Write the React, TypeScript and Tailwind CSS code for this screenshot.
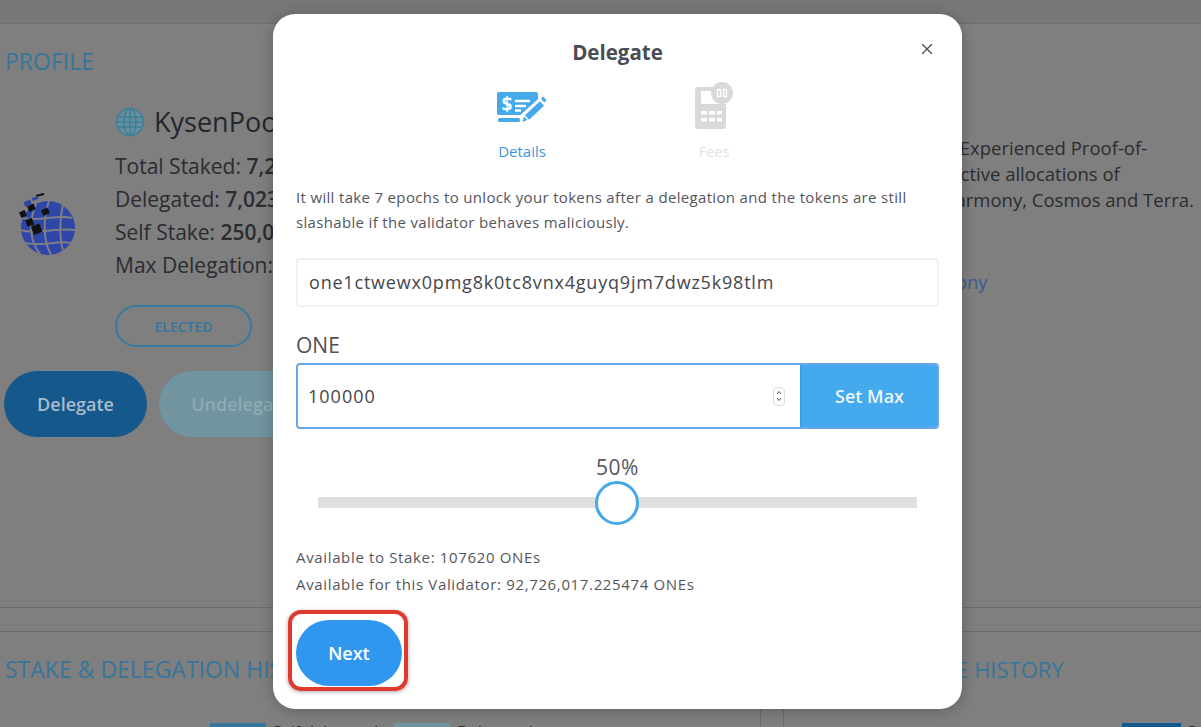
import React from 'react';
import { X } from 'lucide-react';

const font = { fontFamily: '"Open Sans", sans-serif' };

const GlobeLogo = () => (
  <svg className="w-[60px] h-[66px]" viewBox="0 0 60 66">
    <circle cx="30" cy="36" r="27" fill="#2f46a8" />
    <g stroke="#7c7f86" strokeWidth="2" fill="none">
      <path d="M5 26C18 30 42 22 54 26" />
      <path d="M3 38C18 43 42 35 57 38" />
      <path d="M7 51C20 55 42 48 53 51" />
      <path d="M18 12C10 30 12 50 22 62" />
      <path d="M31 9C24 30 26 50 33 63" />
      <path d="M45 13C41 30 42 50 45 58" />
    </g>
    <g fill="#111">
      <rect x="2" y="19" width="6" height="6" transform="rotate(-25 5 22)" />
      <rect x="10" y="13" width="7" height="6" transform="rotate(-25 13 16)" />
      <rect x="8" y="27" width="7" height="7" transform="rotate(-20 11 30)" />
      <rect x="24" y="17" width="7" height="6" transform="rotate(-25 27 20)" />
      <rect x="14" y="33" width="9" height="9" transform="rotate(-20 18 37)" />
      <rect x="18" y="2" width="8" height="2" transform="rotate(-15 22 3)" />
    </g>
    <g fill="#2f46a8">
      <rect x="6" y="9" width="7" height="5" transform="rotate(-25 9 11)" />
      <rect x="14" y="5" width="6" height="3" transform="rotate(-20 17 6)" />
    </g>
  </svg>
);

const WebIcon = () => (
  <svg className="w-[30px] h-[30px]" viewBox="0 0 30 30" fill="none" stroke="#3d7f96" strokeWidth="1.5">
    <circle cx="15" cy="15" r="13.5" fill="#6a8f9c" />
    <ellipse cx="15" cy="15" rx="6" ry="13.5" />
    <path d="M15 1.5V28.5M2 10H28M2 20H28M1.5 15H28.5" />
  </svg>
);

const DetailsIcon = () => (
  <svg className="w-[50px] h-[32px]" viewBox="0 0 50 32">
    <path d="M2 1H39a2 2 0 0 1 2 2V24H2a2 2 0 0 1-2-2V3a2 2 0 0 1 2-2Z" fill="#45a9ea" />
    <text x="10" y="20" textAnchor="middle" fontSize="19" fontWeight="700" fill="#fff" fontFamily="Open Sans, sans-serif">$</text>
    <path d="M18 10H33M18 15H29M18 19.5H24" stroke="#fff" strokeWidth="2.4" />
    <path d="M27 28L46 11" stroke="#fff" strokeWidth="11" />
    <path d="M30 26.5L45 12.5" stroke="#45a9ea" strokeWidth="6" />
    <path d="M25.5 31L27 25.5L30.5 29Z" fill="#45a9ea" />
    <path d="M45.5 9.5L48 7.5" stroke="#45a9ea" strokeWidth="5" />
    <rect x="1" y="27" width="22" height="4" rx="1.5" fill="#45a9ea" />
  </svg>
);

const FeesIcon = () => (
  <svg className="w-[38px] h-[48px]" viewBox="0 0 38 48">
    <path d="M3 5H18V9H6V18H31V44a3 3 0 0 1-3 3H3a3 3 0 0 1-3-3V8a3 3 0 0 1 3-3Z" fill="#d9d9d9" />
    <rect x="6" y="9" width="25" height="13" fill="#fff" />
    <path d="M0 24H31" stroke="#d9d9d9" strokeWidth="3" />
    <g fill="#fff">
      <rect x="6" y="29" width="6" height="3.5" />
      <rect x="14" y="29" width="6" height="3.5" />
      <rect x="22" y="29" width="5" height="3.5" />
      <rect x="6" y="36" width="6" height="3.5" />
      <rect x="14" y="36" width="6" height="3.5" />
      <rect x="22" y="36" width="5" height="3.5" />
    </g>
    <circle cx="27" cy="11" r="11" fill="#d9d9d9" />
    <path d="M22.5 7.5h3v7h-3zM28.5 7.5h3v7h-3z" fill="none" stroke="#fff" strokeWidth="1.4" />
  </svg>
);

const ProfilePanel = () => (
  <div className="w-[760px] shrink-0 pl-[5px] pt-[22px]">
    <h2 className="text-[23px] leading-[30px] text-[#37759b]">PROFILE</h2>
    <div className="flex mt-[28px]">
      <div className="w-[110px] pl-[13px] pt-[88px]">
        <GlobeLogo />
      </div>
      <div>
        <div className="flex items-center gap-[9px] h-[36px]">
          <WebIcon />
          <span className="text-[27px] text-[#24262b]">KysenPool</span>
        </div>
        <div className="mt-[10px] text-[21px] leading-[33px] text-[#2b2c30]">
          <div>Total Staked: <b className="font-semibold">7,273,017</b></div>
          <div>Delegated: <b className="font-semibold">7,023,017</b></div>
          <div>Self Stake: <b className="font-semibold">250,000</b></div>
          <div>Max Delegation: <b className="font-semibold">100,000,000</b></div>
        </div>
        <div className="mt-[23px] w-[137px] h-[42px] rounded-full border-2 border-[#37799f] flex items-center justify-center text-[14px] font-semibold text-[#37759b]">
          ELECTED
        </div>
      </div>
    </div>
    <div className="flex gap-[12px] mt-[24px] -ml-[1px]">
      <div className="w-[143px] h-[66px] rounded-full bg-[#15588c] flex items-center justify-center text-[18px] font-semibold text-[#a9bccb]">
        Delegate
      </div>
      <div className="w-[164px] h-[66px] rounded-full bg-[#71949f] flex items-center justify-center text-[18px] font-semibold text-[#8fabb5]">
        Undelegate
      </div>
    </div>
  </div>
);

const AboutPanel = () => (
  <div className="flex-1 pt-[111px] text-[18.5px] leading-[26px] text-[#2b2c30] whitespace-nowrap">
    <div className="pl-[38px]">KysenPool is an Experienced Proof-of-</div>
    <div className="pl-[45px]">validator with active allocations of</div>
    <div className="pl-[81px]">stake on Harmony, Cosmos and Terra.</div>
    <div className="mt-[56px] pl-[4px] text-[#3a5c94]">harmony.one/harmony</div>
  </div>
);

const ChartLegend = ({ first, second, swatch, width }: { first: string; second?: string; swatch: string; width: string }) => (
  <div className="flex items-start text-[16px] leading-[20px] text-[#2b2c30]">
    <div className={`${width} h-[10px] ${swatch}`} />
    <span className="ml-[7px] -mt-[1px]">{first}</span>
    {second && (
      <>
        <div className="w-[56px] h-[10px] bg-[#71949f] ml-[16px]" />
        <span className="ml-[7px] -mt-[1px]">{second}</span>
      </>
    )}
  </div>
);

const DelegateModal = () => (
  <div className="absolute left-[273px] top-[14px] w-[689px] h-[695px] bg-white rounded-[22px] shadow-[0_2px_14px_rgba(0,0,0,0.25)] px-[23px] text-[#55565c]">
    <h1 className="text-center text-[20.5px] font-bold leading-[28px] mt-[24px] text-[#4b4c55]">Delegate</h1>
    <button className="absolute right-[26px] top-[26px] text-[#4f5056]">
      <X size={18} strokeWidth={1.8} />
    </button>

    <div className="h-[119px] flex items-start">
      <div className="ml-[201px] mt-[25px] w-[50px] flex flex-col items-center">
        <DetailsIcon />
        <span className="mt-[19px] text-[15px] leading-[18px] text-[#3f95df]">Details</span>
      </div>
      <div className="ml-[148px] mt-[16px] w-[38px] flex flex-col items-center">
        <FeesIcon />
        <span className="mt-[13px] text-[14.5px] leading-[18px] text-[#e2e3e5]">Fees</span>
      </div>
    </div>

    <p className="text-[15px] leading-[25px] tracking-[0.33px] whitespace-nowrap text-[#55565c]">
      It will take 7 epochs to unlock your tokens after a delegation and the tokens are still
      <br />
      slashable if the validator behaves maliciously.
    </p>

    <div className="mt-[23px] h-[49px] rounded-[4px] border-2 border-[#f0f1f4] flex items-center pl-[11px] text-[18px] tracking-[0.8px] text-[#45464b]">
      one1ctwewx0pmg8k0tc8vnx4guyq9jm7dwz5k98tlm
    </div>

    <div className="mt-[24px] text-[21px] leading-[28px] text-[#4f5055]">ONE</div>

    <div className="mt-[4px] h-[66px] flex rounded-[4px] border-2 border-[#68a5ef] overflow-hidden">
      <div className="flex-1 flex items-center justify-between pl-[10px] pr-[15px] text-[18px] tracking-[1px] text-[#45464b]">
        <span>100000</span>
        <span className="w-[12px] h-[19px] rounded-[4px] border border-[#dcdcdc] flex flex-col items-center justify-center text-[#55565c]">
          <svg className="w-[8px] h-[14px]" viewBox="0 0 8 14" fill="none" stroke="currentColor" strokeWidth="1">
            <path d="M2 5L4 2.5L6 5M2 9L4 11.5L6 9" />
          </svg>
        </span>
      </div>
      <div className="w-[137px] border-l-2 border-[#3a9eea] bg-[#45a9ed] flex items-center justify-center text-[18px] font-semibold text-[#eaf6fe]">
        Set Max
      </div>
    </div>

    <div className="mt-[24px] text-center text-[21px] leading-[28px] tracking-[0.5px] text-[#55565c]">50%</div>

    <div className="mx-[22px] mt-[16px] h-[11px] bg-[#dfe0e0] relative">
      <div className="absolute left-[calc(50%-1px)] top-1/2 -translate-x-1/2 -translate-y-1/2 w-[44px] h-[44px] rounded-full bg-white border-[3px] border-[#45a9e8]" />
    </div>

    <div className="mt-[36px] text-[15px] leading-[27px] tracking-[0.65px] text-[#55565c]">
      <div>Available to Stake: 107620 ONEs</div>
      <div>Available for this Validator: 92,726,017.225474 ONEs</div>
    </div>

    <div className="relative mt-[22px] w-[106px] h-[66px] rounded-full bg-[#3097ef] flex items-center justify-center text-[18px] font-semibold text-white">
      Next
      <div className="absolute -left-[8px] -right-[6px] -top-[10px] -bottom-[5px] rounded-[13px] border-4 border-[#df3a2e] shadow-[0_1px_4px_rgba(0,0,0,0.35)]" />
    </div>
  </div>
);

export default function App() {
  return (
    <div className="relative w-[1201px] h-[727px] overflow-hidden bg-[#7f7f7f]" style={font}>
      <div className="h-[24px] bg-[#777777] border-b border-[#6f6f6f]" />

      <div className="h-[584px] flex border-b border-[#6c6c6c]">
        <ProfilePanel />
        <div className="w-[23px] shrink-0" />
        <AboutPanel />
      </div>

      <div className="h-[23px]" />

      <div className="h-[96px] flex border-t border-[#6c6c6c]">
        <div className="w-[761px] shrink-0 border-r border-[#6c6c6c] pl-[5px] pt-[22px]">
          <h2 className="text-[23px] leading-[30px] text-[#37759b]">STAKE &amp; DELEGATION HISTORY</h2>
          <div className="mt-[39px] pl-[205px]">
            <ChartLegend first="Self delegated" second="Delegated" swatch="bg-[#37759b]" width="w-[56px]" />
          </div>
        </div>
        <div className="w-[22px] shrink-0" />
        <div className="flex-1 border-l border-[#6c6c6c] pl-[27px] pt-[22px]">
          <h2 className="text-[22px] leading-[30px] text-[#37759b] whitespace-nowrap">PERFORMANCE HISTORY</h2>
          <div className="mt-[39px] pl-[311px]">
            <ChartLegend first="Rate" swatch="bg-[#15588c]" width="w-[59px]" />
          </div>
        </div>
      </div>

      <DelegateModal />
    </div>
  );
}
